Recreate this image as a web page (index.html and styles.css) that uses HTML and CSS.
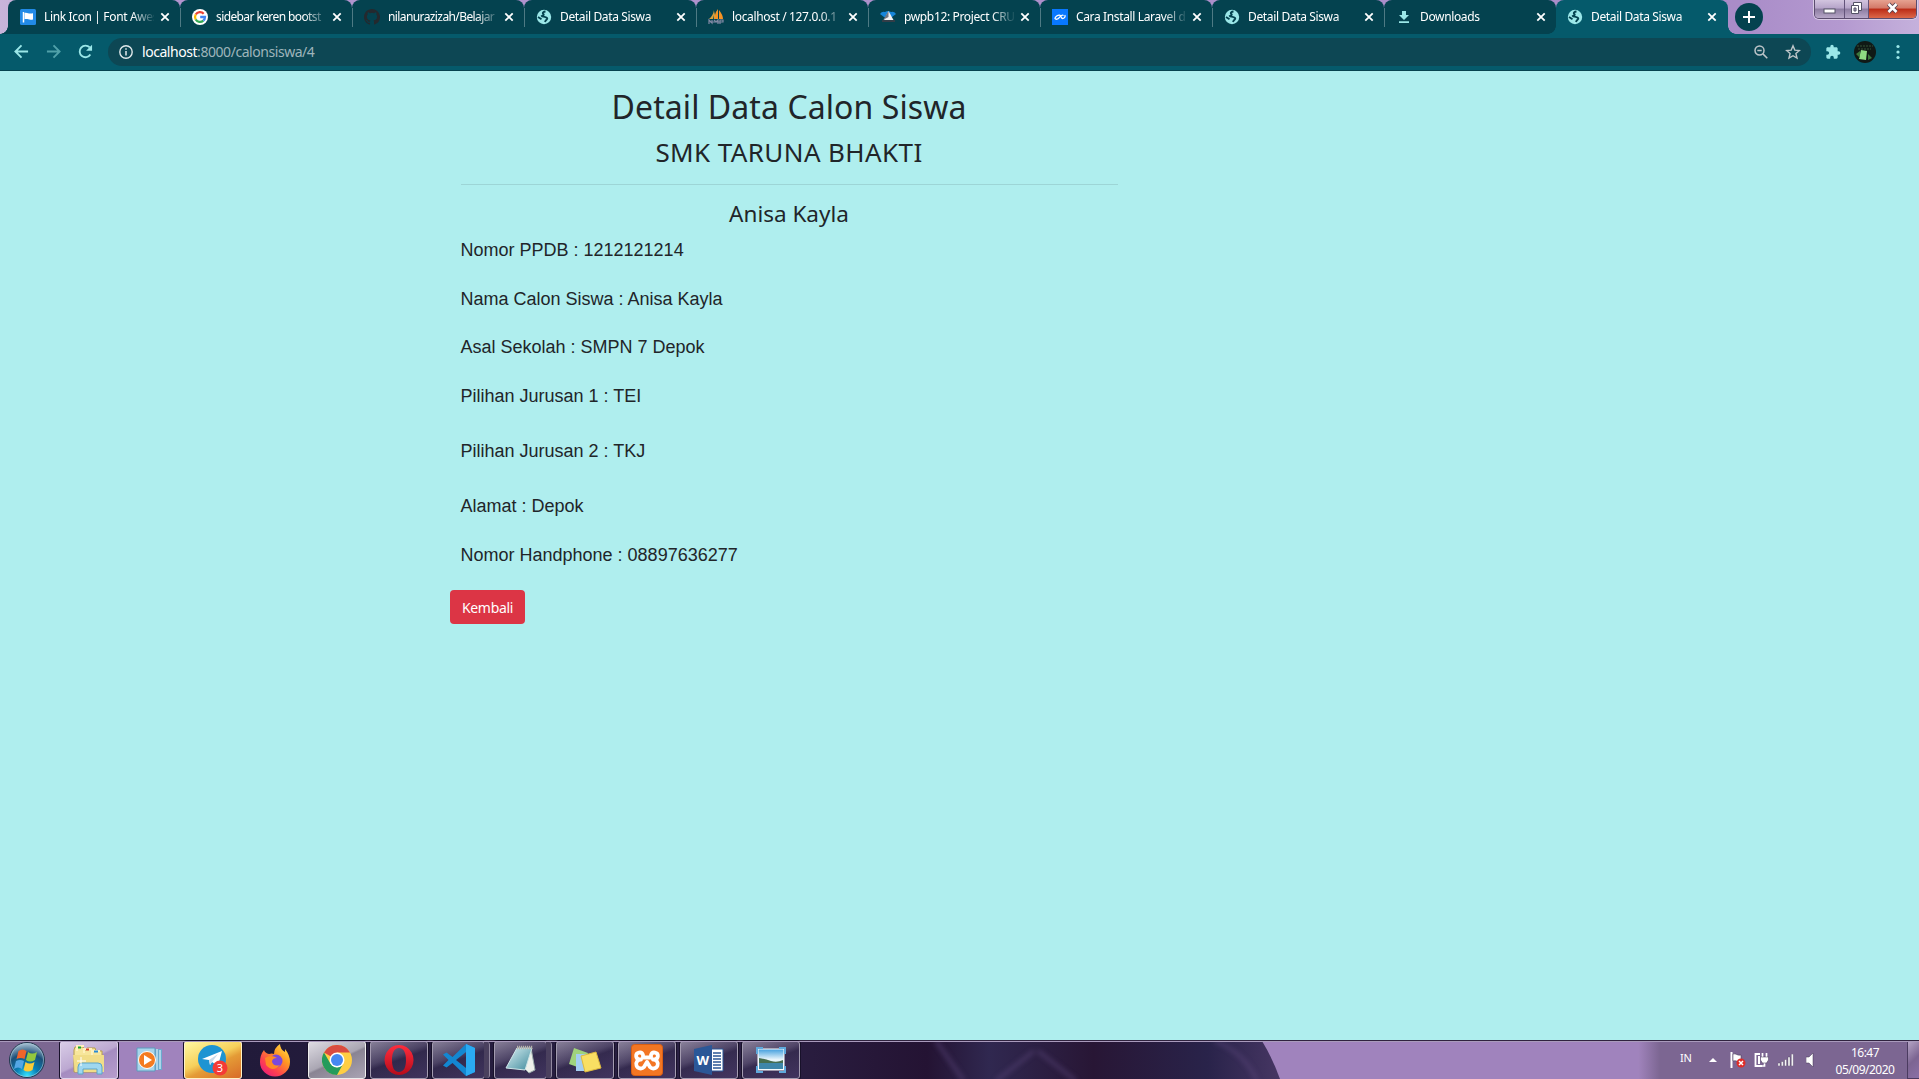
FILE: index.html
```html
<!DOCTYPE html>
<html lang="id">
<head>
<meta charset="utf-8">
<title>Detail Data Siswa</title>
<link rel="stylesheet" href="styles.css">
</head>
<body>
<svg class="defs" width="0" height="0">
  <symbol id="x" viewBox="0 0 10 10"><path d="M1.300 1.300l7.400 7.400M8.700 1.300L1.300 8.700" stroke="#fff" stroke-width="1.800"/></symbol>
  <symbol id="globe" viewBox="0 0 16 16"><circle cx="8" cy="8" r="7.200" fill="#9be7e8"/><path d="M9.500 2.500C7.500 2.600 6 4 7.300 5c1.200.9-.4 1.500-1.500 2 .3 1 2.200.4 3.300 1 1 .6 2.400.5 2.200 1.700-.2 1.200-1.600 1-2.300 3.300M2 8l3.500 2.200" fill="none" stroke="#04424f" stroke-width="1.900"/></symbol>
</svg>
<header class="tabs">
  <div class="tab"><svg class="fav" viewBox="0 0 16 16"><rect width="16" height="16" rx="1.500" fill="#228ae6"/><path d="M3.500 3v10.500" stroke="#fff" stroke-width="1.500"/><path d="M4.500 4c3-1 4 1.500 8.500.2v6.200c-4 1.300-5-1-8.500-.1z" fill="#fff"/></svg><span class="name">Link Icon | Font Awes</span><svg class="close"><use href="#x"/></svg></div>
  <div class="tab"><svg class="fav" viewBox="0 0 16 16"><circle cx="8" cy="8" r="8" fill="#fff"/><g fill="none" stroke-width="2.300"><path d="M11.700 4.700A5 5 0 0 0 3.700 5.500" stroke="#ea4335"/><path d="M3.700 5.500a5 5 0 0 0 0 5" stroke="#fbbc05"/><path d="M3.700 10.500a5 5 0 0 0 7.600 1.200" stroke="#34a853"/><path d="M11.300 11.700A5 5 0 0 0 13 8H8.200" stroke="#4285f4"/></g></svg><span class="name tight">sidebar keren bootst</span><svg class="close"><use href="#x"/></svg></div>
  <div class="tab"><svg class="fav" viewBox="0 0 16 16"><path fill="#24292e" d="M8 0C3.580 0 0 3.580 0 8c0 3.540 2.290 6.530 5.470 7.590.4.070.550-.170.550-.380 0-.190-.010-.820-.010-1.490-2.010.370-2.530-.490-2.690-.940-.090-.230-.480-.940-.820-1.130-.280-.150-.680-.520-.010-.530.630-.010 1.080.580 1.230.820.720 1.210 1.870.870 2.330.660.070-.520.280-.870.510-1.070-1.780-.2-3.640-.890-3.640-3.950 0-.870.310-1.590.820-2.150-.080-.2-.360-1.020.080-2.120 0 0 .670-.210 2.200.820a7.600 7.600 0 0 1 4 0c1.530-1.040 2.200-.820 2.200-.820.440 1.100.160 1.920.080 2.120.510.560.820 1.270.820 2.150 0 3.070-1.870 3.750-3.650 3.950.290.250.540.730.540 1.480 0 1.070-.010 1.930-.010 2.200 0 .210.150.460.550.380A8 8 0 0 0 8 0z"/></svg><span class="name tight">nilanurazizah/Belajar</span><svg class="close"><use href="#x"/></svg></div>
  <div class="tab"><svg class="fav"><use href="#globe"/></svg><span class="name">Detail Data Siswa</span><svg class="close"><use href="#x"/></svg></div>
  <div class="tab"><svg class="fav" viewBox="0 0 16 16"><path d="M6 1Q5 7 1 10h5zM7 2v8H5z" fill="#d9a13d"/><path d="M10 0Q6 5 7 10h3zM11 1q4 5 4 9h-4z" fill="#f69324"/><path d="M1 15v-4l3 3v-3M6 11l2 2 2-2v4M12 15v-4h3v2h-3M2 13h12" fill="none" stroke="#8189a4" stroke-width="1.200"/></svg><span class="name">localhost / 127.0.0.1</span><svg class="close"><use href="#x"/></svg></div>
  <div class="tab"><svg class="fav" viewBox="0 0 16 16"><path d="M0 5q2-3 5-2 3-2 6 0 3-1 5 2l-4 3H4z" fill="#1686d9"/><path d="M8.500 2l5 9H4z" fill="#f1f1f1"/><path d="M8.500 2v6L3 11z" fill="#707681"/><path d="M2 11h13v2H2z" fill="#333d47"/></svg><span class="name">pwpb12: Project CRU</span><svg class="close"><use href="#x"/></svg></div>
  <div class="tab"><svg class="fav" viewBox="0 0 16 16"><rect width="16" height="16" fill="#0878ff"/><path d="M3 9.500c0-2 3-3.500 4.500-3.300C9.300 6.400 9 9.500 10.500 9.500 12 9.500 13.500 8 13 6.500M3 9.500c1 1.500 3 .5 4-.7C8.500 7 10 5.700 11 6.300" fill="none" stroke="#fff" stroke-width="1.300" stroke-linecap="round"/></svg><span class="name">Cara Install Laravel d</span><svg class="close"><use href="#x"/></svg></div>
  <div class="tab"><svg class="fav"><use href="#globe"/></svg><span class="name">Detail Data Siswa</span><svg class="close"><use href="#x"/></svg></div>
  <div class="tab"><svg class="fav" viewBox="0 0 16 16"><path d="M6 2h4v4h3L8 11 3 6h3zM3 12.300h10V14H3z" fill="#9be7e8"/></svg><span class="name">Downloads</span><svg class="close"><use href="#x"/></svg></div>
  <div class="tab active"><svg class="fav"><use href="#globe"/></svg><span class="name">Detail Data Siswa</span><svg class="close"><use href="#x"/></svg></div>
  <div class="newtab"><svg width="12" height="12" viewBox="0 0 12 12"><path d="M6 0v12M0 6h12" stroke="#fff" stroke-width="2"/></svg></div>
  <div class="winbtns">
    <span class="min"><svg width="13" height="7"><rect x="1" y="1" width="11" height="4" fill="#fff" stroke="#545366"/></svg></span>
    <span class="max"><svg width="13" height="13" fill="#fff" stroke="#545366"><path d="M3.500.5h8v8h-8z"/><path d="M1.500 3.500h7v8h-7z"/><path d="M4 6h2v3H4z" fill="#aaa0bc"/></svg></span>
    <span class="quit"><svg width="13" height="12" viewBox="0 0 13 12"><path d="M2.500 2l8 8M10.500 2l-8 8" stroke="#56404e" stroke-width="4.400"/><path d="M2.500 2l8 8M10.500 2l-8 8" stroke="#fff" stroke-width="2.600"/></svg></span>
  </div>
</header>
<nav class="toolbar">
  <svg class="nav" viewBox="0 0 16 16"><path d="M15 8H2M8 1.500L1.500 8 8 14.500" fill="none" stroke="#9be7e8" stroke-width="2"/></svg>
  <svg class="nav dim" viewBox="0 0 16 16"><path d="M1 8h13M8 1.500L14.500 8 8 14.500" fill="none" stroke="#9be7e8" stroke-width="2"/></svg>
  <svg class="nav" viewBox="0 0 16 16"><path d="M13.200 11.300A6.200 6.200 0 1 1 12.500 3.700" fill="none" stroke="#9be7e8" stroke-width="2"/><path d="M15 .8v6.400H8.600z" fill="#9be7e8"/></svg>
  <div class="omnibox">
    <svg class="info" viewBox="0 0 14 14"><circle cx="7" cy="7" r="6.200" fill="none" stroke="#e1e9eb" stroke-width="1.400"/><path d="M7 6v4.500M7 3.300v1.500" stroke="#e1e9eb" stroke-width="1.500"/></svg>
    <span class="url"><b>localhost</b>:8000/calonsiswa/4</span>
    <svg class="mag" viewBox="0 0 14 14" fill="none" stroke="#bdc5c9" stroke-width="1.500"><circle cx="5.500" cy="5.500" r="4.500"/><path d="M8.900 8.900l4.400 4.400M3.300 5.500h4.400"/></svg>
    <svg class="star" viewBox="0 0 16 16"><path d="M8 1.800l1.800 4.300 4.600.4-3.500 3 1.100 4.600L8 11.700l-4 2.400 1.100-4.600-3.500-3 4.600-.4z" fill="none" stroke="#bdc5c9" stroke-width="1.400"/></svg>
  </div>
  <svg class="puzzle" viewBox="0 0 24 24"><path fill="#9be7e8" d="M20.500 11H19V7c0-1.100-.9-2-2-2h-4V3.500a2.500 2.500 0 0 0-5 0V5H4c-1.100 0-2 .9-2 2v3.800h1.500a2.700 2.700 0 0 1 0 5.400H2V20c0 1.100.9 2 2 2h3.800v-1.500a2.700 2.700 0 0 1 5.400 0V22H17c1.100 0 2-.9 2-2v-4h1.500a2.500 2.500 0 0 0 0-5z"/></svg>
  <svg class="avatar" viewBox="0 0 22 22"><circle cx="11" cy="11" r="11" fill="#101916"/><path d="M3 5h16M4 8h13" stroke="#28402c" stroke-width="1.500" stroke-dasharray="2 1"/><path d="M7 9l6 1-1 9-7-1z" fill="#8fdc83"/><path d="M2 13l4-3v7zM14 13l4 4-4 2z" fill="#3c783d"/></svg>
  <svg class="dots" viewBox="0 0 4 16" fill="#9be7e8"><circle cx="2" cy="2.500" r="1.600"/><circle cx="2" cy="8" r="1.600"/><circle cx="2" cy="13.500" r="1.600"/></svg>
</nav>
<main class="page">
  <section class="detail">
    <h1>Detail Data Calon Siswa</h1>
    <h2>SMK TARUNA BHAKTI</h2>
    <hr>
    <h3>Anisa Kayla</h3>
    <p>Nomor PPDB : 1212121214</p>
    <p>Nama Calon Siswa : Anisa Kayla</p>
    <p>Asal Sekolah : SMPN 7 Depok</p>
    <p>Pilihan Jurusan 1 : TEI</p>
    <p class="wide">Pilihan Jurusan 2 : TKJ</p>
    <p class="wide">Alamat : Depok</p>
    <p>Nomor Handphone : 08897636277</p>
    <a class="btn">Kembali</a>
  </section>
</main>
<footer class="taskbar">
  <svg class="wall" viewBox="0 0 1919 38" preserveAspectRatio="none">
    <defs>
      <linearGradient id="dark"><stop offset="0" stop-color="#211a3a"/><stop offset=".5" stop-color="#2b2043"/><stop offset=".66" stop-color="#241333"/><stop offset=".72" stop-color="#302850"/><stop offset=".82" stop-color="#281635"/><stop offset=".93" stop-color="#29234a"/><stop offset="1" stop-color="#463663"/></linearGradient>
      <linearGradient id="tray"><stop offset="0" stop-color="#a184bd"/><stop offset="1" stop-color="#7c6692"/></linearGradient>
      <filter id="soft"><feGaussianBlur stdDeviation="2.500"/></filter>
    </defs>
    <rect width="1919" height="38" fill="#a083bd"/><rect width="60" height="38" fill="#7c6792"/>
    <path d="M242 0H1262Q1273 18 1280 38H242z" fill="url(#dark)"/>
    <g filter="url(#soft)" fill="none" stroke="#5b477b" stroke-width="4" opacity=".5"><path d="M936 0l28 40M1034 10l-38 30M1038 10l38 30M1215 0q30 12 42 40"/></g>
    <rect x="1638" width="22" height="38" fill="url(#tray)"/><rect x="1660" width="259" height="38" fill="#7c6692"/>
  </svg>
  <div class="task orb"><svg width="38" height="38" viewBox="0 0 38 38"><defs><radialGradient id="o" cx=".5" cy=".95" r=".9"><stop offset="0" stop-color="#35e4ff"/><stop offset=".35" stop-color="#087eb4"/><stop offset=".7" stop-color="#1b4f78"/><stop offset="1" stop-color="#9bb7cb"/></radialGradient></defs><circle cx="19" cy="19" r="17.500" fill="url(#o)" stroke="#24394f"/><circle cx="19" cy="19" r="16.500" fill="none" stroke="#a7c7d8" opacity=".6"/><path d="M10.500 10q4-3 8 0l-2 8q-4-2-8 0z" fill="#f0642a"/><path d="M20 11q4 3 9 0l-2 8q-5 3-9 0z" fill="#93c83d"/><path d="M8 20q4-2 8 0l-2 8q-4-3-8 0z" fill="#54a7e5"/><path d="M17.500 21q4 3 9 0l-2 8q-5 3-9 0z" fill="#fccb37"/></svg></div>
  <div class="task pane light explorer"><svg width="34" height="30" viewBox="0 0 34 30"><path d="M2 5l1-3h8l2 3h1l1-2h8l1 3h6v21H2z" fill="#f7e69b" stroke="#b79d4b"/><path d="M5 6V1h7M12 8V4h8M20 10V6h8" fill="none" stroke="#fff1bd" stroke-width="2"/><path d="M6 2.500h3" stroke="#13a330" stroke-width="2"/><path d="M14 4.500h3" stroke="#d63c25" stroke-width="2"/><path d="M22 6.500h4" stroke="#278bd5" stroke-width="2"/><path d="M1 10h31v17H3z" fill="#f1dd88"/><path d="M6 29v-7q0-4 4-4h16q4 0 4 4v7h-5v-5H11v5z" fill="#9ed7ef" stroke="#5aa5ca"/><path d="M9 12v9M5 16h9" stroke="#fff"/></svg></div>
  <div class="task media"><svg width="30" height="28" viewBox="0 0 30 28"><path d="M12 3h14v21H12z" fill="#6ba9ce"/><path d="M24 4v19M21 3v21" stroke="#c2e4f4" stroke-width="1.500"/><path d="M1 2h18v23H1z" fill="#a8d5eb" stroke="#5d9abd"/><circle cx="11" cy="14" r="8.500" fill="#f47b20" stroke="#fff"/><path d="M8 9l8 5-8 5z" fill="#fff"/></svg></div>
  <div class="task pane gold"><svg width="32" height="32" viewBox="0 0 32 32"><circle cx="15" cy="15" r="14" fill="#1d94d2"/><path d="M5 15L25 7l-4 15-6-4-2 3-1-5z" fill="#fff"/><path d="M12 16l9-6-6 8-2 3z" fill="#c8daea"/><circle cx="23" cy="24" r="7.500" fill="#f43b36"/><text x="23" y="28.300" text-anchor="middle" class="count">3</text></svg></div>
  <div class="task fox"><svg width="32" height="33" viewBox="0 0 32 33"><defs><linearGradient id="f" x1="1" y1="0" x2=".2" y2="1"><stop offset="0" stop-color="#fff44f"/><stop offset=".4" stop-color="#ff9822"/><stop offset=".75" stop-color="#ff4050"/><stop offset="1" stop-color="#e91e79"/></linearGradient></defs><path d="M5 6q1 3 5 4 3-1 5 0 0-6 6-10 0 5 5 8 0-2 0-3 5 6 5 13a15 14.500 0 0 1-30 0Q1 11 5 6z" fill="url(#f)"/><circle cx="17" cy="17" r="6.500" fill="#7b49db"/><path d="M6 14q6-4 12 0-5 0-5 4 2 5 8 3-7 8-14 0z" fill="#ff8a24"/></svg></div>
  <div class="task pane silver"><svg width="30" height="30" viewBox="0 0 30 30"><circle cx="15" cy="15" r="15" fill="#ffce43"/><path d="M15 15L2 7.500A15 15 0 0 1 28 7.500H15z" fill="#d94b40"/><path d="M15 30A15 15 0 0 1 2 7.500L8.500 18.800 15 22.500 21 19z" fill="#249b5b"/><circle cx="15" cy="15" r="7.500" fill="#fff"/><circle cx="15" cy="15" r="6" fill="#4588f1"/></svg></div>
  <div class="task pane opera"><svg width="30" height="32" viewBox="0 0 30 32"><defs><linearGradient id="r" x2="0" y2="1"><stop stop-color="#ff2d3d"/><stop offset="1" stop-color="#b50b1a"/></linearGradient></defs><path fill-rule="evenodd" d="M15 1a14.500 15 0 1 0 .1 0zM15 4c5 0 7 5 7 12s-2 12-7 12-7-5-7-12 2-12 7-12z" fill="url(#r)"/></svg></div>
  <div class="task pane stack code"><svg width="32" height="32" viewBox="0 0 32 32"><path d="M23 0L9.500 13 3.500 8.500 0 10.500 5.500 16 0 21.500l3.500 2L9.500 19 23 32l9-4V4zM23 8v16l-10-8z" fill="#1387d1" fill-rule="evenodd"/><path d="M23 0l9 4v24l-9 4z" fill="#2aaaf2"/></svg></div>
  <div class="task pane stack note"><svg width="32" height="30" viewBox="0 0 32 30"><defs><linearGradient id="n" x2="1" y2="1"><stop stop-color="#d8eff2"/><stop offset="1" stop-color="#3f8a9c"/></linearGradient></defs><path d="M26 3l4 22-6 3-4-4z" fill="#eef0ea" stroke="#9aa"/><path d="M12 3h15l-7 22-19-2z" fill="url(#n)" stroke="#cfe6e8"/><path d="M12 2.500h16" stroke="#b5b3ab" stroke-width="3.500" stroke-dasharray="1.200 .8"/></svg></div>
  <div class="task pane sticky"><svg width="34" height="28" viewBox="0 0 34 28"><path d="M6 2l14 5-5 16-14-5z" fill="#a0d37c"/><path d="M8 8h15v17H8z" fill="#a3cef1"/><path d="M13 10l15-4 5 16-16 4z" fill="#f9df63" stroke="#ddb93f"/></svg></div>
  <div class="task pane xampp"><svg width="32" height="32" viewBox="0 0 32 32"><rect x=".5" y=".5" width="31" height="31" rx="3" fill="#f37623" stroke="#d95f14"/><path d="M12 13.500V11a3.500 3.500 0 1 0-3.500 4.500H10a4.500 4.500 0 1 0 3 7.500l3-5 3 5a4.500 4.500 0 1 0 3-7.500h1.500A3.500 3.500 0 1 0 20 11v2.500z" fill="none" stroke="#fff" stroke-width="3.800" stroke-linejoin="round"/></svg></div>
  <div class="task pane word"><svg width="30" height="30" viewBox="0 0 30 30"><path d="M17 4h12v22H17z" fill="#fff" stroke="#2b5797"/><path d="M19 8h8M19 11h8M19 14h8M19 17h8M19 20h8M19 23h8" stroke="#2b5797" stroke-width="1.300"/><path d="M0 4l18-4v30L0 26z" fill="#2b5797"/><text x="8.700" y="20" text-anchor="middle" class="w">W</text></svg></div>
  <div class="task pane photo"><svg width="30" height="26" viewBox="0 0 30 26"><defs><linearGradient id="s" x2="0" y2="1"><stop stop-color="#3f9ddd"/><stop offset=".5" stop-color="#e8f5fb"/></linearGradient></defs><path d="M2 2h26v21H2z" fill="url(#s)" stroke="#fff"/><path d="M3 11q6 1 12 3t12-1v4H3z" fill="#456d50"/><path d="M3 16h24v6H3z" fill="#3e86a9"/><path d="M1 7V1h6M23 1h6v6M29 19v6h-6M7 25H1v-6" fill="none" stroke="#5fa9dc" stroke-width="2"/></svg></div>
  <div class="tray">
    <span class="lang">IN</span>
    <svg class="up" width="8" height="5"><path d="M4 0l4 4H0z" fill="#fff"/></svg>
    <svg class="flag" width="16" height="16" viewBox="0 0 16 16"><path d="M1.500 0v16" stroke="#fff" stroke-width="2"/><path d="M3 2c3-1 4 2 8 1v6c-4 1-5-1-8 0z" fill="#fff" stroke="#3c304d" stroke-width=".5"/><circle cx="11" cy="11" r="4.500" fill="#df2d28"/><path d="M9 9l4 4M13 9l-4 4" stroke="#fff" stroke-width="1.500"/></svg>
    <svg class="plug" width="15" height="16" viewBox="0 0 15 16"><path d="M6 2H1.500v12H8" fill="none" stroke="#fff" stroke-width="1.800"/><path d="M4 4h2v8H4z" fill="#fff"/><path d="M8.500 1v4M12.500 1v4M10.500 10v4H7" stroke="#fff" stroke-width="1.700" fill="none"/><path d="M6.500 5h8v3l-2 3h-4l-2-3z" fill="#fff" stroke="#423653" stroke-width=".5"/></svg>
    <svg class="signal" width="16" height="12" fill="#fff" stroke="#493c59" stroke-width=".4"><path d="M0 9h2v3H0zM3.300 7.500h2V12h-2zM6.600 5.500h2V12h-2zM10 3h2v9h-2zM13.300 0h2v12h-2z"/></svg>
    <svg class="sound" width="9" height="14"><path d="M0 4h3l4-4v14l-4-4H0z" fill="#fff" stroke="#423653" stroke-width=".5"/></svg>
    <span class="clock"><span>16:47</span><span>05/09/2020</span></span>
    <span class="desk"></span>
  </div>
</footer>
</body>
</html>
```
FILE: styles.css
```css
* { box-sizing: border-box; }
body { margin: 0; width: 1919px; height: 1079px; overflow: hidden; display: flex; flex-direction: column; background: #afeeee; font-family: "Noto Sans", "Open Sans", sans-serif; }
svg { display: block; flex: none; }
.defs { position: absolute; }

.tabs { height: 34px; flex: none; display: flex; padding-left: 8px; background: linear-gradient(90deg, #c8b4da 0, #b295cf 160px, #a98cc8 1740px, #b499d0 1840px, #c5b1dc 1919px); }
.tab { position: relative; width: 172px; height: 34px; flex: none; display: flex; align-items: center; padding-left: 12px; border-radius: 8px 8px 0 0; background: #04424f; color: #fff; font-size: 12px; }
.tab + .tab:not(.active)::before { content: ""; position: absolute; left: 0; top: 8px; width: 1px; height: 19px; background: #4e7a84; }
.fav { width: 16px; height: 16px; }
.name { width: 110px; margin-left: 8px; line-height: 18px; letter-spacing: -.36px; white-space: nowrap; -webkit-mask-image: linear-gradient(90deg, #000 88px, transparent 112px); mask-image: linear-gradient(90deg, #000 88px, transparent 112px); }
.tight { letter-spacing: -.6px; }
.close { width: 10px; height: 10px; margin-left: 6px; }
.tab:first-child::after { content: ""; position: absolute; left: -8px; bottom: 0; width: 8px; height: 8px; background: radial-gradient(circle at 0 0, transparent 7.5px, #04424f 8px); }
.active { background: #055a6b; padding-left: 11px; }
.active::before { content: ""; position: absolute; left: -8px; bottom: 0; width: 8px; height: 8px; background: radial-gradient(circle at 0 0, transparent 7.5px, #055a6b 8px); }
.active::after { content: ""; position: absolute; right: -8px; bottom: 0; width: 8px; height: 8px; background: radial-gradient(circle at 100% 0, transparent 7.5px, #055a6b 8px); }
.newtab { width: 28px; height: 28px; margin: 3px 0 0 7px; border-radius: 50%; background: #04424f; display: flex; align-items: center; justify-content: center; }
.winbtns { margin-left: 51px; width: 103px; height: 19px; display: flex; border: 1px solid #5b4c6e; border-top: 0; border-radius: 0 0 5px 5px; overflow: hidden; box-shadow: 0 0 0 1px #d8cbe5; }
.winbtns span { display: flex; align-items: center; justify-content: center; background: linear-gradient(#d2c5df, #b6a4c9 45%, #8c7ca1 50%, #b7a7c8); border-right: 1px solid #63547a; padding-bottom: 2px; }
.winbtns .min { width: 30px; padding-top: 6px; }
.winbtns .max { width: 24px; }
.winbtns .quit { flex: 1; border: 0; background: linear-gradient(#e6a291, #d37867 45%, #bb2b16 50%, #dc6849); }

.toolbar { height: 37px; flex: none; display: flex; align-items: center; padding: 0 19px 1px 14px; background: #055a6b; border-bottom: 1px solid #07434f; }
.nav { width: 15px; height: 15px; margin-right: 17px; }
.dim { opacity: .5; }
.omnibox { width: 1705px; height: 28px; margin-left: -2px; border-radius: 14px; background: #0d4754; display: flex; align-items: center; padding: 0 10px 0 11px; }
.info { width: 14px; height: 14px; }
.url { margin-left: 9px; flex: 1; font-size: 14px; letter-spacing: -.45px; color: #9eb5bb; line-height: 20px; }
.url b { font-weight: 400; color: #fff; }
.mag { width: 14px; height: 14px; margin-right: 17px; }
.star { width: 16px; height: 16px; }
.puzzle { width: 16px; height: 16px; margin-left: 14px; }
.avatar { width: 22px; height: 22px; margin-left: 13px; }
.dots { width: 4px; height: 16px; margin-left: 20px; }

.page { flex: 1; color: #212529; }
.detail { width: 657px; margin-left: 460.5px; padding-top: 16px; }
h1, h2, h3 { margin: 0; font-weight: 400; text-align: center; white-space: nowrap; }
h1 { font-size: 32px; line-height: 40px; letter-spacing: .08px; }
h2 { font-size: 26px; line-height: 32px; margin-top: 9px; letter-spacing: .4px; }
hr { margin: 16px 0 0; border: 0; border-top: 1px solid #9dd5d6; }
h3 { font-size: 22.500px; line-height: 30px; margin: 14px 0 8px; }
.detail p { margin: 0 0 21.500px; font: 18px/27px "Liberation Sans", Arial, sans-serif; white-space: nowrap; }
.detail .wide { margin-top: 28px; margin-bottom: 28.500px; }
.detail .wide + .wide { margin-bottom: 21.500px; }
.btn { display: flex; align-items: center; justify-content: center; width: 75px; height: 34px; margin-left: -10.500px; border-radius: 4px; background: #dc3545; color: #fff; font-size: 14px; letter-spacing: -.3px; }

.taskbar { position: relative; height: 39px; flex: none; display: flex; border-top: 1px solid #30233f; }
.wall { position: absolute; inset: 0; width: 1919px; height: 38px; }
.taskbar::before { content: ""; position: absolute; z-index: 1; top: 0; left: 0; right: 0; height: 1px; background: #a99abc; }
.task { position: relative; width: 58px; height: 38px; flex: none; display: flex; align-items: center; justify-content: center; margin-right: 4px; }
.pane { border: 1px solid #a39bb0; border-radius: 3px; box-shadow: 0 0 0 1px #18112a; background: linear-gradient(160deg, rgba(215,208,226,.55) 0, rgba(150,140,175,.35) 40%, rgba(75,65,105,.35) 50%, rgba(90,75,125,.5)); }
.orb { width: 53px; margin-right: 7px; }
.light { margin-right: 0; border-color: #ded3ea; background: linear-gradient(155deg, #d9cde7, #bca8d1 48%, #a58cc0 52%, #b69dcd); }
.media { width: 65px; margin-right: 1px; }
.gold { margin-right: 0; border-color: #fff2c7; background: linear-gradient(155deg, #fff8a2, #f6d05b 45%, #e49b36 60%, #d96b29); }
.fox { width: 66px; margin-right: 0; }
.silver { border-color: #eee; background: linear-gradient(155deg, #dedce3, #aaa6b3 48%, #898493 52%, #aaa4b4); }
.stack { width: 53px; margin-right: 9px; }
.stack::after { content: ""; position: absolute; top: 0; right: -6px; width: 5px; height: 36px; border-right: 1px solid #91889f; background: #4a405e; border-radius: 0 3px 3px 0; }
.count { font: 11px "Noto Sans", sans-serif; fill: #fff; }
.w { font: bold 13px "Noto Sans", sans-serif; fill: #fff; }
.tray { position: relative; flex: 1; display: flex; align-items: center; margin-left: 876px; color: #fff; font-size: 12px; }
.lang { width: 12px; margin-bottom: 5px; font-size: 11px; letter-spacing: -.3px; }
.up { margin-left: 17px; margin-top: 1px; }
.flag { margin-left: 13px; }
.plug { margin-left: 8px; }
.signal { margin-left: 9px; }
.sound { margin-left: 12px; }
.clock { width: 84px; margin-left: 8px; padding-top: 2px; display: flex; flex-direction: column; align-items: center; line-height: 17px; letter-spacing: -.5px; }
.desk { width: 14px; height: 38px; margin-left: auto; border: 1px solid #4b3b60; background: linear-gradient(135deg, #b3a2c3, #7c6592 50%, #8b70a7); }
```
